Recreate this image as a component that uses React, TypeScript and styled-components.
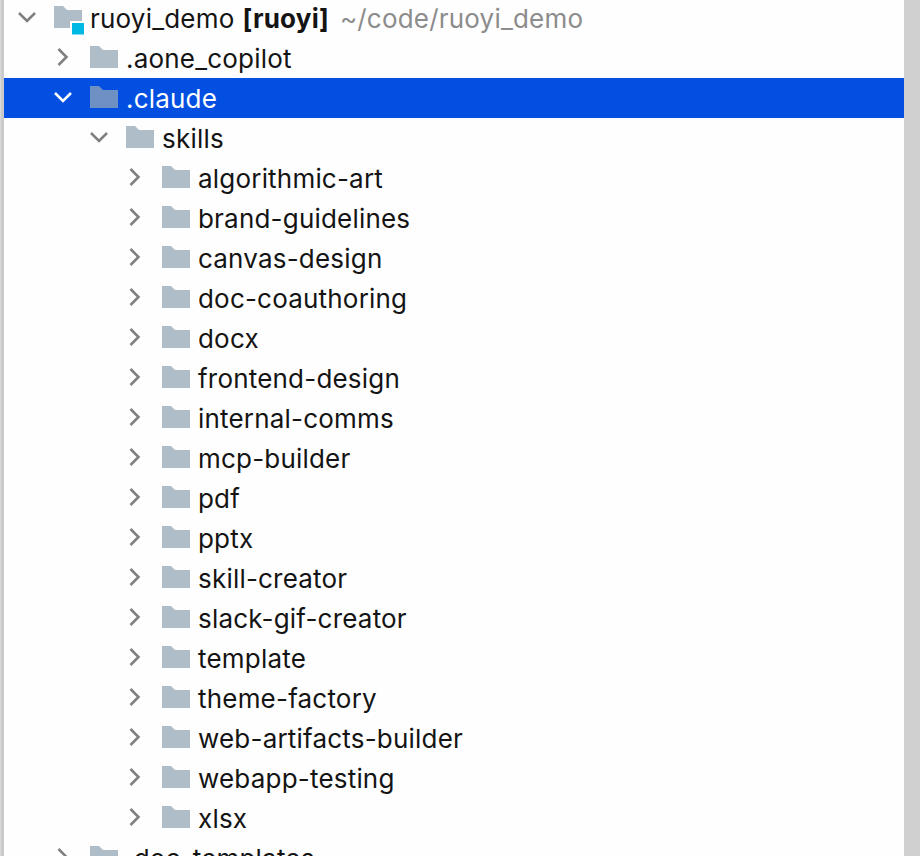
import React from "react";
import styled, { createGlobalStyle } from "styled-components";

const Global = createGlobalStyle`
  html, body { margin: 0; padding: 0; height: 100%; overflow: hidden; background: #fefefe; }
  #root { height: 100%; }
`;

const Window = styled.div`
  width: 920px;
  height: 856px;
  overflow: hidden;
  display: grid;
  grid-template-columns: 4px 900px 16px;
  background: #fefefe;
`;

const Edge = styled.div<{ $left?: boolean }>`
  background: ${(p) =>
    p.$left ? "linear-gradient(to right, #dedede, #c8c8c8 50%, #cacaca)" : "#d0d0d0"};
`;

const Tree = styled.ul`
  list-style: none;
  margin: -2px 0 0;
  padding: 0;
  font-family: Inter, "Liberation Sans", sans-serif;
  font-size: 26px;
  letter-spacing: 0.2px;
  color: #141414;
`;

const Row = styled.li<{ $depth: number; $selected?: boolean }>`
  height: 40px;
  display: flex;
  align-items: center;
  padding-left: ${(p) => p.$depth * 36 + 10}px;
  white-space: nowrap;
  background: ${(p) => (p.$selected ? "#024fe1" : "transparent")};
  color: ${(p) => (p.$selected ? "#ffffff" : "inherit")};
`;

const ChevronBox = styled.svg`
  width: 24px;
  height: 24px;
  margin-right: 16px;
  flex: none;
  fill: none;
  stroke-width: 2.5;
  stroke-linecap: butt;
  stroke-linejoin: miter;
`;

const FolderBox = styled.svg`
  width: 30px;
  height: 30px;
  margin-right: 6px;
  flex: none;
  overflow: visible;
`;

const Label = styled.span`
  line-height: 40px;
  padding-top: 2px;
`;

const Bold = styled(Label)`
  font-weight: 700;
  margin-left: 8px;
`;

const Hint = styled(Label)`
  color: #8c8c8c;
  margin-left: 11px;
`;

const Chevron = ({ open, selected }: { open: boolean; selected?: boolean }) => (
  <ChevronBox viewBox="0 0 24 24" stroke={selected ? "#ffffff" : "#7f7f7f"}>
    {open ? <path d="M5 7 L13 15 L21 7" /> : <path d="M8.5 3 L16.5 11 L8.5 19" />}
  </ChevronBox>
);

const Folder = ({ selected, root }: { selected?: boolean; root?: boolean }) => (
  <FolderBox viewBox="0 0 30 30">
    <path
      d="M0 3 H9 L13 7 H28 V25 H0 Z"
      fill={selected ? "#6f90c2" : "#aebdc7"}
    />
    {root && (
      <>
        <rect x="16" y="18" width="14" height="14" fill="#fefefe" />
        <rect x="18" y="20" width="12" height="11.5" fill="#00b8e4" />
      </>
    )}
  </FolderBox>
);

const skills = [
  "algorithmic-art",
  "brand-guidelines",
  "canvas-design",
  "doc-coauthoring",
  "docx",
  "frontend-design",
  "internal-comms",
  "mcp-builder",
  "pdf",
  "pptx",
  "skill-creator",
  "slack-gif-creator",
  "template",
  "theme-factory",
  "web-artifacts-builder",
  "webapp-testing",
  "xlsx",
];

export default function App() {
  return (
    <Window>
      <Global />
      <Edge $left />
      <Tree>
        <Row $depth={0}>
          <Chevron open />
          <Folder root />
          <Label>ruoyi_demo</Label>
          <Bold>[ruoyi]</Bold>
          <Hint>~/code/ruoyi_demo</Hint>
        </Row>
        <Row $depth={1}>
          <Chevron open={false} />
          <Folder />
          <Label>.aone_copilot</Label>
        </Row>
        <Row $depth={1} $selected>
          <Chevron open selected />
          <Folder selected />
          <Label>.claude</Label>
        </Row>
        <Row $depth={2}>
          <Chevron open />
          <Folder />
          <Label>skills</Label>
        </Row>
        {skills.map((s) => (
          <Row key={s} $depth={3}>
            <Chevron open={false} />
            <Folder />
            <Label>{s}</Label>
          </Row>
        ))}
        <Row $depth={1}>
          <Chevron open={false} />
          <Folder />
          <Label>.doc_templates</Label>
        </Row>
      </Tree>
      <Edge />
    </Window>
  );
}
